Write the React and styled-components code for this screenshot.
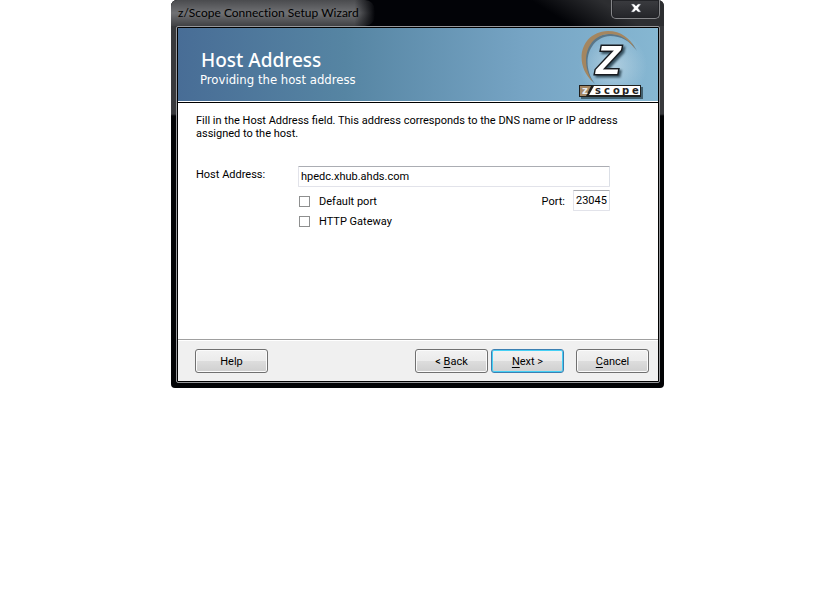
import React, { useState } from 'react';
import styled, { createGlobalStyle } from 'styled-components';

const Logo = () => (
  <LogoImage viewBox='0 0 70 72' role='img' aria-label='z/scope'>
    <defs>
      <radialGradient id='halo'>
        <stop offset='0' stopColor='#c4dbe8' />
        <stop offset='1' stopColor='#c4dbe8' stopOpacity='0' />
      </radialGradient>
    </defs>
    <ellipse cx='36' cy='38' rx='34' ry='34' fill='url(#halo)' opacity='0.7' />
    <path
      d='M18 56 C-2 37 6 7 32 6 C45 5 55 12 60 23 C53 13 44 8 33 8 C12 9 3 36 18 56Z'
      fill='#4f6878'
      opacity='0.8'
    />
    <path
      d='M16 54 C-4 36 3 4 31 3 C44 3 53 10 58 21 C51 11 43 6 32 6 C10 7 2 34 16 54Z'
      fill='#a48660'
    />
    <LogoZ x='19' y='46'>Z</LogoZ>
    <rect x='4' y='59' width='62' height='12' fill='#42606f' />
    <rect x='2' y='57' width='62' height='12' fill='#20201e' />
    <path d='M17 58 H63 V67 H12Z' fill='#fff' />
    <path d='M3 58 H14 L9 68 H3Z' fill='#a58764' />
    <LogoText x='5' y='66' fill='#e8edf0'>z</LogoText>
    <LogoText x='18 27 36 45 55' y='66' fill='#25221e'>scope</LogoText>
  </LogoImage>
);

const App = () => {
  const [address, setAddress] = useState('hpedc.xhub.ahds.com');
  const [port, setPort] = useState('23045');

  return (
    <>
      <GlobalStyle />
      <Dialog role='dialog' aria-labelledby='dialog-title'>
        <TitleBar>
          <WindowTitle id='dialog-title'>z/Scope Connection Setup Wizard</WindowTitle>
          <CloseButton type='button' aria-label='Close'>
            <svg width='12' height='10' viewBox='0 0 12 10'>
              <path
                d='M1 1 H4 L6 3 L8 1 H11 L8 5 L11 9 H8 L6 7 L4 9 H1 L4 5Z'
                fill='#fff'
                stroke='#50555f'
                strokeWidth='0.5'
              />
            </svg>
          </CloseButton>
        </TitleBar>
        <Client onSubmit={e => e.preventDefault()}>
          <Banner>
            <div>
              <Heading>Host Address</Heading>
              <Subheading>Providing the host address</Subheading>
            </div>
            <Logo />
          </Banner>
          <Content>
            <Intro>
              Fill in the Host Address field. This address corresponds to the DNS
              name or IP address assigned to the host.
            </Intro>
            <Fields>
              <Label htmlFor='address'>Host Address:</Label>
              <TextInput
                id='address'
                value={address}
                onChange={e => setAddress(e.target.value)}
              />
              <Options>
                <div>
                  <CheckLabel>
                    <Checkbox type='checkbox' />
                    Default port
                  </CheckLabel>
                  <CheckLabel>
                    <Checkbox type='checkbox' />
                    HTTP Gateway
                  </CheckLabel>
                </div>
                <PortField>
                  <Label htmlFor='port'>Port:</Label>
                  <PortInput
                    id='port'
                    value={port}
                    onChange={e => setPort(e.target.value)}
                  />
                </PortField>
              </Options>
            </Fields>
          </Content>
          <Footer>
            <Button type='button'>Help</Button>
            <Actions>
              <Steps>
                <Button type='button'>&lt; <u>B</u>ack</Button>
                <Button type='submit' $primary><u>N</u>ext &gt;</Button>
              </Steps>
              <Button type='button'><u>C</u>ancel</Button>
            </Actions>
          </Footer>
        </Client>
      </Dialog>
    </>
  );
};

export default App;

const GlobalStyle = createGlobalStyle`
  * {
    box-sizing: border-box;
  }

  body {
    margin: 0;
    background: #fff;
    color: #000;
    font: 11px/13px Roboto, 'Liberation Sans', sans-serif;
  }

  button,
  input {
    font: inherit;
    color: inherit;
  }
`;

const Dialog = styled.section`
  width: 100%;
  max-width: 493px;
  margin: 0 auto;
  padding: 0 4px 5px 5px;
  background: linear-gradient(#38393c, #38393c 114px, #020305 116px);
  border-radius: 6px 6px 4px 4px;
`;

const TitleBar = styled.header`
  display: flex;
  justify-content: space-between;
  align-items: flex-start;
  height: 26px;
  margin: 0 -4px 0 -5px;
  padding: 0 4px 0 0;
  background: linear-gradient(32deg, #020307 75%, #2d2e31 88%);
  border-radius: 6px 6px 0 0;
`;

const WindowTitle = styled.div`
  padding: 5px 16px 5px 7px;
  background:
    linear-gradient(90deg, transparent 90%, #020307),
    linear-gradient(#4a4b4e, #707174 50%, #404144);
  border-radius: 6px 10px 10px 0;
  font: 12px/16px Lato, 'Open Sans', sans-serif;
  font-variant-ligatures: none;
`;

const CloseButton = styled.button`
  display: flex;
  justify-content: center;
  width: 49px;
  height: 19px;
  padding: 3px 0 0;
  background: linear-gradient(#3b3c40, #242529);
  border: 1px solid #86878a;
  border-top: 0;
  border-radius: 0 0 5px 5px;
  box-shadow: inset 0 0 0 1px #222327;
`;

const Client = styled.form`
  border: 1px solid #96979a;
  border-radius: 2px;
  background: #000;
  padding: 1px;
`;

const Banner = styled.div`
  display: flex;
  justify-content: space-between;
  height: 75px;
  padding: 0 11px 0 22px;
  background: linear-gradient(90deg, #486d96, #5685a3 35%, #76a4c4 72%, #86b7d2);
  border-bottom: 1px solid #000;
  box-shadow: inset 0 -1px #fff;
  color: #fff;
`;

const Heading = styled.h1`
  margin: 20px 0 0 1px;
  font: 500 19px/24px 'Noto Sans', sans-serif;
`;

const Subheading = styled.p`
  margin: 0;
  font: 13px/16px 'DejaVu Sans Condensed', 'DejaVu Sans', sans-serif;
`;

const LogoImage = styled.svg`
  width: 70px;
  height: 72px;
`;

const LogoZ = styled.text`
  font: italic bold 40px 'Liberation Sans', sans-serif;
  fill: #fff;
  stroke: #171b20;
  stroke-width: 3px;
  paint-order: stroke;
  filter: drop-shadow(2px 2px 1px #35505f);
`;

const LogoText = styled.text`
  font: bold 10px 'DejaVu Sans', sans-serif;
`;

const Content = styled.div`
  min-height: 236px;
  padding: 11px 20px 20px 18px;
  background: #fff;
`;

const Intro = styled.p`
  margin: 0 0 26px;
`;

const Fields = styled.div`
  display: grid;
  grid-template-columns: 102px 1fr;
  row-gap: 3px;
  padding-right: 28px;
`;

const Label = styled.label`
  padding-top: 2px;
`;

const TextInput = styled.input`
  width: 100%;
  height: 21px;
  padding: 0 2px;
  background: #fff;
  border: 1px solid #e2e3ea;
  border-top-color: #abadb3;
  border-right-color: #dbdfe6;
  border-radius: 1px;
`;

const Options = styled.div`
  grid-column: 2;
  display: flex;
  justify-content: space-between;
`;

const CheckLabel = styled.label`
  display: flex;
  align-items: center;
  gap: 9px;
  height: 20px;
  margin-left: 1px;

  &:first-child {
    margin-top: 1px;
  }
`;

const Checkbox = styled.input`
  appearance: none;
  width: 11px;
  height: 11px;
  margin: 0;
  background: #fff;
  border: 1px solid #8e8f8f;

  &:checked {
    box-shadow: inset 0 0 0 2px #fff;
    background: #31347c;
  }
`;

const PortField = styled.div`
  display: flex;
  gap: 8px;

  ${Label} {
    padding-top: 5px;
  }
`;

const PortInput = styled(TextInput)`
  width: 37px;
`;

const Footer = styled.footer`
  display: flex;
  justify-content: space-between;
  padding: 9px 9px 8px 17px;
  background: #f0f0f0;
  border-top: 1px solid #a0a0a0;
  box-shadow: inset 0 1px #fff;
`;

const Actions = styled.div`
  display: flex;
  gap: 12px;
`;

const Steps = styled.div`
  display: flex;
  gap: 3px;
`;

const Button = styled.button`
  width: 73px;
  height: 24px;
  padding: 0;
  border: 1px solid ${props => (props.$primary ? '#3c7fb1' : '#707070')};
  border-radius: 3px;
  background: linear-gradient(#f2f2f2, #ebebeb 50%, #dddddd 50%, #cfcfcf);
  box-shadow: inset 0 0 0 1px ${props => (props.$primary ? '#45d0f5' : '#fbfbfb')};

  u {
    text-underline-offset: 2px;
  }
`;
